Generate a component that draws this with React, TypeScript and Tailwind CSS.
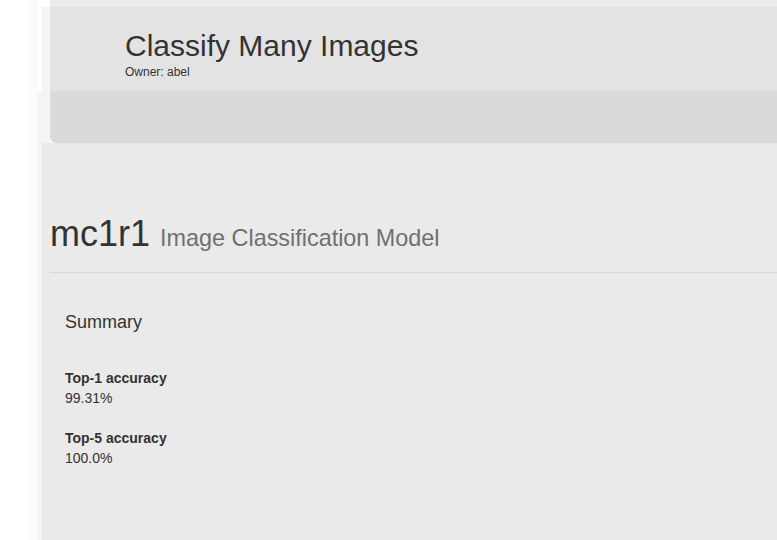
import React from "react";

export default function App() {
  return (
    <div
      className="flex h-[540px] w-[777px] overflow-hidden bg-white text-[#333333]"
      style={{ fontFamily: '"Liberation Sans", Arial, Helvetica, sans-serif' }}
    >
      <div className="w-[38px] shrink-0 bg-[linear-gradient(to_right,#ffffff_70%,#f9f9f9)]" />
      <div className="flex min-w-0 flex-1 flex-col">
        {/* header group */}
        <div className="flex h-[143px] shrink-0">
          <div className="flex w-[12px] shrink-0 flex-col">
            <div className="h-[7px] bg-white" />
            <div className="flex h-[84px]">
              <div className="w-[4px] bg-white" />
              <div className="flex-1 bg-[#f4f4f4]" />
            </div>
            <div className="h-[52px] bg-[#f4f4f4]" />
          </div>
          <div className="flex min-w-0 flex-1 flex-col">
            <div className="h-[7px] bg-[#ebebeb]" />
            <div className="h-[84px] bg-[#e3e3e3] pl-[75px] pt-[22px]">
              <h1 className="text-[30px] leading-[33px] font-normal text-[#333333]">
                Classify Many Images
              </h1>
              <div className="mt-[2px] text-[12px] leading-[17px] text-[#333333]">
                Owner: abel
              </div>
            </div>
            <div className="h-[52px] rounded-bl-[6px] bg-[#dadada]" />
          </div>
        </div>
        {/* body */}
        <div className="flex flex-1">
          <div className="w-[4px] shrink-0 bg-[#f4f4f4]" />
          <div className="min-w-0 flex-1 bg-[#eaeaea] pl-[8px]">
            <div className="mt-[71px] border-b border-[#d9d9d9] pb-[18px]">
              <h1 className="whitespace-nowrap text-[36px] leading-[40px] font-normal text-[#333333]">
                mc1r1{" "}
                <small className="text-[23.4px] leading-none text-[#707070]">
                  Image Classification Model
                </small>
              </h1>
            </div>
            <div className="pl-[15px]">
              <h3 className="mt-[39px] text-[18px] leading-[20px] font-normal text-[#333333]">
                Summary
              </h3>
              <dl className="mt-[36px] mb-[20px] text-[14px] leading-[20px]">
                <dt className="font-bold">Top-1 accuracy</dt>
                <dd>99.31%</dd>
              </dl>
              <dl className="mb-[20px] text-[14px] leading-[20px]">
                <dt className="font-bold">Top-5 accuracy</dt>
                <dd>100.0%</dd>
              </dl>
            </div>
          </div>
        </div>
      </div>
    </div>
  );
}
